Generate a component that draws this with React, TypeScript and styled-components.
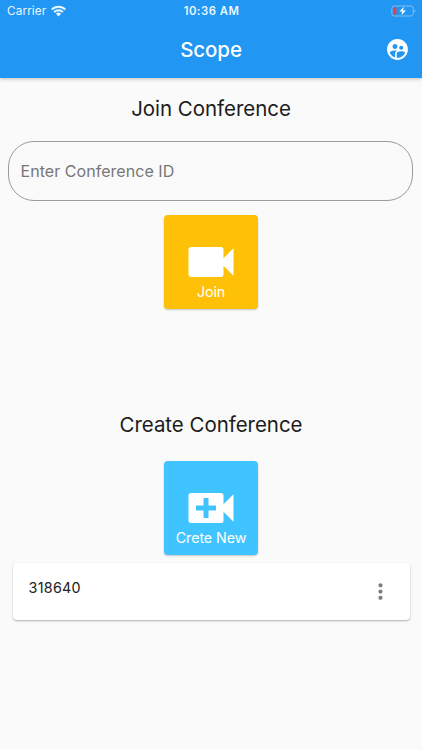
import React from "react";
import styled, { createGlobalStyle } from "styled-components";
import { MdMoreVert, MdSupervisedUserCircle, MdVideocam } from "react-icons/md";

const GlobalStyle = createGlobalStyle`
  * { box-sizing: border-box; }
  body { margin: 0; background: #fafafa; font-family: Inter, "Liberation Sans", sans-serif; }
  button { font: inherit; border: 0; padding: 0; }
`;

const Screen = styled.div`
  height: 750px;
  display: flex;
  flex-direction: column;
  overflow: hidden;
  color: #212121;
`;

const Header = styled.header`
  height: 78px;
  flex: none;
  background: #2196f3;
  color: #fff;
  box-shadow: 0 1px 4px rgba(0, 0, 0, 0.24);
`;

const StatusBar = styled.div`
  height: 22px;
  padding: 0 6px 0 7px;
  display: grid;
  grid-template-columns: 1fr auto 1fr;
  align-items: center;
  font-size: 11.7px;
  color: #e9f7ff;
`;

const Carrier = styled.div`
  display: flex;
  align-items: center;
  gap: 5px;
  letter-spacing: 0.15px;
`;

const Clock = styled.div`
  font-weight: 600;
  font-size: 11.3px;
  letter-spacing: 0.5px;
`;

const Battery = styled.svg`
  justify-self: end;
`;

const AppBar = styled.div`
  height: 54px;
  padding: 0 12px;
  display: grid;
  grid-template-columns: 25px 1fr 25px;
  align-items: center;
`;

const Title = styled.h1`
  margin: 0;
  text-align: center;
  font-size: 20.5px;
  font-weight: 500;
  letter-spacing: -0.1px;
`;

const IconButton = styled.button`
  display: flex;
  background: none;
  color: inherit;
`;

const Section = styled.section<{ $height?: number }>`
  height: ${(p) => (p.$height ? `${p.$height}px` : "auto")};
  display: flex;
  flex-direction: column;
  align-items: center;
`;

const Heading = styled.h2<{ $top: number; $gap: number }>`
  margin: ${(p) => p.$top}px 0 ${(p) => p.$gap}px;
  height: 28px;
  line-height: 28px;
  font-size: 20.5px;
  font-weight: 400;
  letter-spacing: -0.04px;
  color: #1c1c1c;
`;

const Field = styled.input`
  width: 405px;
  height: 60px;
  flex: none;
  margin-right: 1px;
  padding: 0 12px 0 11.5px;
  border: 1px solid #9b9b9b;
  border-radius: 26px;
  background: transparent;
  outline: 0;
  font: 400 16px Inter, "Liberation Sans", sans-serif;
  letter-spacing: 0.05px;
  &::placeholder { color: #777; opacity: 1; }
`;

const Tile = styled.button<{ $color: string }>`
  width: 94px;
  height: 94px;
  flex: none;
  padding-top: 17px;
  display: flex;
  flex-direction: column;
  align-items: center;
  border-radius: 4px;
  background: ${(p) => p.$color};
  color: #fff;
  box-shadow: 0 1px 2px rgba(0, 0, 0, 0.22);
  svg { flex: none; }
`;

const TileLabel = styled.span`
  margin-top: -9px;
  line-height: 18px;
  font-size: 14.3px;
  letter-spacing: -0.1px;
  white-space: nowrap;
`;

const JoinTile = styled(Tile)`
  margin-top: 14px;
`;

const Card = styled.div`
  width: 397px;
  height: 57px;
  margin-top: 8px;
  padding: 0 17px 0 16px;
  display: flex;
  justify-content: space-between;
  border-radius: 4px;
  background: #fff;
  box-shadow: 0 1px 2px rgba(0, 0, 0, 0.3);
`;

const ConferenceId = styled.span`
  margin-top: 15px;
  line-height: 20px;
  font-size: 14.3px;
  letter-spacing: 0.3px;
`;

const MenuButton = styled(IconButton)`
  margin-top: 16px;
  align-self: flex-start;
  color: #7c7c7c;
`;

function WifiIcon() {
  return (
    <svg width="15" height="12" viewBox="0 0 15 12" fill="none" stroke="currentColor" strokeWidth="2">
      <path d="M.7 4.5a9.6 9.6 0 0 1 13.6 0M3.1 7.1a6.2 6.2 0 0 1 8.8 0" />
      <path d="M4.9 8.8a3.7 3.7 0 0 1 5.2 0l-2.6 2.7Z" fill="currentColor" stroke="none" />
    </svg>
  );
}

function BatteryIcon() {
  return (
    <Battery width="25" height="12" viewBox="0 0 25 12" fill="none">
      <rect x=".9" y="1" width="21.4" height="10" rx="2.5" stroke="#85bdec" />
      <path d="M23.6 4.3c1.2.6 1.2 2.8 0 3.4Z" fill="#85c5fa" />
      <rect x="2.2" y="2.4" width="3.2" height="7.2" rx="1" fill="#e34052" />
      <path d="M13.1 1.8 8.3 6.5h3l-1.1 3.8L15 5.6h-3Z" fill="#fff" />
    </Battery>
  );
}

function VideoAddIcon() {
  return (
    <svg width="60" height="60" viewBox="0 0 24 24" fill="currentColor">
      <path
        fillRule="evenodd"
        d="M17 10.5V7a1 1 0 0 0-1-1H4a1 1 0 0 0-1 1v10a1 1 0 0 0 1 1h12a1 1 0 0 0 1-1v-3.5l4 4v-11l-4 4ZM14 13h-3v3H9v-3H6v-2h3V8h2v3h3v2Z"
      />
    </svg>
  );
}

export default function App() {
  return (
    <>
      <GlobalStyle />
      <Screen>
        <Header>
          <StatusBar>
            <Carrier>
              <span>Carrier</span>
              <WifiIcon />
            </Carrier>
            <Clock>10:36 AM</Clock>
            <BatteryIcon />
          </StatusBar>
          <AppBar>
            <span />
            <Title>Scope</Title>
            <IconButton aria-label="Participants">
              <MdSupervisedUserCircle size={25} />
            </IconButton>
          </AppBar>
        </Header>
        <Section $height={317}>
          <Heading $top={17} $gap={18}>Join Conference</Heading>
          <Field placeholder="Enter Conference ID" />
          <JoinTile $color="#ffc107">
            <MdVideocam size={60} />
            <TileLabel>Join</TileLabel>
          </JoinTile>
        </Section>
        <Section>
          <Heading $top={16} $gap={22}>Create Conference</Heading>
          <Tile $color="#40c4ff">
            <VideoAddIcon />
            <TileLabel>Crete New</TileLabel>
          </Tile>
          <Card>
            <ConferenceId>318640</ConferenceId>
            <MenuButton aria-label="Conference options">
              <MdMoreVert size={25} />
            </MenuButton>
          </Card>
        </Section>
      </Screen>
    </>
  );
}
